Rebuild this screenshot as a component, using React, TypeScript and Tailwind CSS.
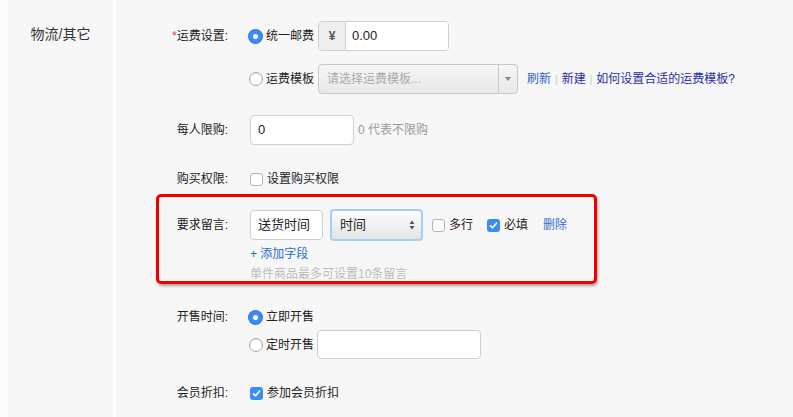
import React from "react";

const Radio = ({ checked }: { checked?: boolean }) =>
	checked ? (
		<span className="flex h-[13px] w-[13px] shrink-0 items-center justify-center rounded-full bg-[#3b8cf3] shadow-[0_0_0_1px_#2f7ae0]">
			<span className="h-[5px] w-[5px] rounded-full bg-white" />
		</span>
	) : (
		<span className="h-[14px] w-[14px] shrink-0 rounded-full border border-[#a9a9a9] bg-white shadow-[inset_0_1px_1px_rgba(0,0,0,0.1)]" />
	);

const Checkbox = ({ checked, className = "" }: { checked?: boolean; className?: string }) =>
	checked ? (
		<span className={`flex h-[13px] w-[13px] shrink-0 items-center justify-center rounded-[3px] bg-[#3b8cf3] ${className}`}>
			<svg width="9" height="9" viewBox="0 0 9 9">
				<path d="M1.5 4.8 L3.6 6.8 L7.6 2" fill="none" stroke="white" strokeWidth="1.6" strokeLinecap="round" strokeLinejoin="round" />
			</svg>
		</span>
	) : (
		<span className={`block h-[13px] w-[13px] shrink-0 rounded-[3px] border border-[#b5b5b5] bg-white ${className}`} />
	);

const Label = ({ children, w = "w-[112px]" }: { children: React.ReactNode; w?: string }) => (
	<div className={`${w} shrink-0 text-right text-[12px] text-[#222]`}>{children}</div>
);

export default function App() {
	return (
		<div className="flex h-[417px] w-[793px] overflow-hidden bg-[#f7f7f7] font-['Liberation_Sans','Noto_Sans_CJK_SC',sans-serif] text-[12px] text-[#222]">
			{/* section title */}
			<div className="w-[113px] shrink-0 border-l-[8px] border-[#fbfbfb] pt-[24px] text-center text-[14px] text-[#333]">
				物流/其它
			</div>
			<div className="w-[3px] shrink-0 bg-white" />

			<div className="flex flex-1 flex-col pt-[21px]">
				{/* 运费设置 */}
				<div className="flex h-[30px] items-center">
					<Label>
						<span className="text-[#e4393c]">*</span>运费设置:
					</Label>
					<div className="ml-[21px] flex items-center">
						<Radio checked />
						<span className="ml-[4px]">统一邮费</span>
						<div className="ml-[4px] flex h-[30px] w-[131px] overflow-hidden rounded-[4px] border border-[#cfcfcf]">
							<span className="flex w-[27px] items-center justify-center border-r border-[#cfcfcf] bg-[#eeeeee] text-[12px] font-bold text-[#555]">¥</span>
							<span className="flex flex-1 items-center bg-white pl-[6px] text-[13px]">0.00</span>
						</div>
					</div>
				</div>

				<div className="mt-[13px] flex h-[30px] items-center">
					<Label> </Label>
					<div className="ml-[21px] flex items-center">
						<Radio />
						<span className="ml-[3px]">运费模板</span>
						<div className="ml-[4px] flex h-[30px] w-[200px] overflow-hidden rounded-[4px] border border-[#c8c8c8] bg-gradient-to-b from-[#f6f6f6] to-[#e9e9e9]">
							<span className="flex flex-1 items-center pl-[8px] text-[#aaa]">请选择运费模板...</span>
							<span className="flex w-[19px] items-center justify-center border-l border-[#c8c8c8]">
								<span className="h-0 w-0 border-x-[3px] border-t-[4px] border-x-transparent border-t-[#888]" />
							</span>
						</div>
						<div className="ml-[9px] flex items-center">
							<span className="text-[#2f64c4]">刷新</span>
							<span className="mx-[4px] text-[10px] text-[#c8c8c8]">|</span>
							<span className="text-[#2e2ba6]">新建</span>
							<span className="mx-[4px] text-[10px] text-[#c8c8c8]">|</span>
							<span className="text-[#2e2ba6]">如何设置合适的运费模板?</span>
						</div>
					</div>
				</div>

				{/* 每人限购 */}
				<div className="mt-[21px] flex h-[30px] items-center">
					<Label>每人限购:</Label>
					<div className="ml-[22px] flex items-center">
						<div className="flex h-[30px] w-[104px] items-center rounded-[4px] border border-[#cfcfcf] bg-white pl-[7px] text-[13px]">0</div>
						<span className="ml-[4px] text-[#999]">0 代表不限购</span>
					</div>
				</div>

				{/* 购买权限 */}
				<div className="mt-[24px] flex h-[20px] items-center">
					<Label>购买权限:</Label>
					<div className="ml-[22px] flex items-center">
						<Checkbox />
						<span className="ml-[4px]">设置购买权限</span>
					</div>
				</div>

				{/* 要求留言 */}
				<div className="ml-[40px] mt-[5px] h-[90px] w-[441px] rounded-[5px] border-[3px] border-[#ee0000] pt-[12px] shadow-[1px_2px_3px_rgba(0,0,0,0.35)]">
					<div className="flex h-[32px] items-center">
						<Label w="w-[69px]">要求留言:</Label>
						<div className="ml-[22px] flex items-center">
							<div className="flex h-[30px] w-[73px] items-center rounded-[4px] border border-[#cfcfcf] bg-white pl-[7px] text-[13px]">送货时间</div>
							<div className="ml-[7px] flex h-[32px] w-[93px] items-center justify-between rounded-[4px] border-[2px] border-[#a8cdf2] bg-gradient-to-b from-[#fdfdfd] to-[#e4e4e4] pl-[8px] pr-[6px] text-[13px]">
								<span>时间</span>
								<svg width="6" height="10" viewBox="0 0 6 10">
									<path d="M3 0.5 L5.5 4 H0.5 Z M3 9.5 L5.5 6 H0.5 Z" fill="#555" />
								</svg>
							</div>
							<Checkbox className="ml-[9px]" />
							<span className="ml-[4px]">多行</span>
							<Checkbox checked className="ml-[14px]" />
							<span className="ml-[4px]">必填</span>
							<span className="ml-[15px] text-[#3a6bcf]">删除</span>
						</div>
					</div>
					<div className="ml-[91px] mt-[4px] text-[#2f6bcf]">+ 添加字段</div>
					<div className="ml-[91px] mt-[2px] text-[#bbb]">单件商品最多可设置10条留言</div>
				</div>

				{/* 开售时间 */}
				<div className="mt-[24px] flex h-[18px] items-center">
					<Label>开售时间:</Label>
					<div className="ml-[21px] flex items-center">
						<Radio checked />
						<span className="ml-[4px]">立即开售</span>
					</div>
				</div>
				<div className="mt-[4px] flex h-[29px] items-center">
					<Label> </Label>
					<div className="ml-[21px] flex items-center">
						<Radio />
						<span className="ml-[3px]">定时开售</span>
						<div className="ml-[3px] h-[29px] w-[164px] rounded-[4px] border border-[#cfcfcf] bg-white" />
					</div>
				</div>

				{/* 会员折扣 */}
				<div className="mt-[24px] flex h-[20px] items-center">
					<Label>会员折扣:</Label>
					<div className="ml-[22px] flex items-center">
						<Checkbox checked />
						<span className="ml-[4px]">参加会员折扣</span>
					</div>
				</div>
			</div>
		</div>
	);
}
